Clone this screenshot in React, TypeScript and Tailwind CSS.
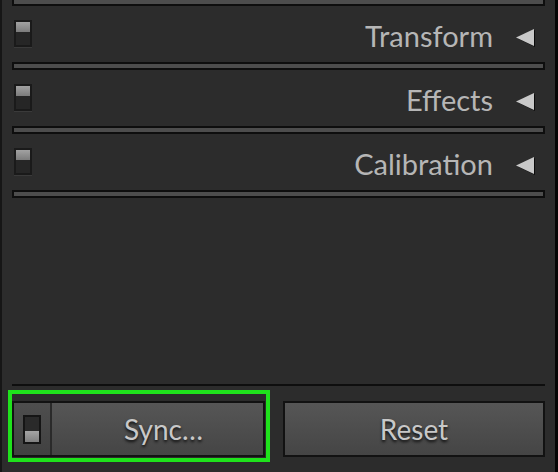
const sections = ["Transform", "Effects", "Calibration"];

const Separator = ({ className = "" }: { className?: string }) => (
  <div className={`h-[8px] border-2 border-[#0e0e0e] bg-[#4d4d4d] ${className}`} />
);

const PanelToggle = ({ on = true }: { on?: boolean }) => (
  <div className="flex h-[27px] w-[18px] flex-col border-2 border-[#1a1a1a] bg-[#262626] shadow-[0_1px_0_#3a3a3a]">
    {on && <div className="h-[10px] w-full bg-gradient-to-b from-[#a2a2a2] to-[#7c7c7c]" />}
  </div>
);

const CollapseArrow = () => (
  <svg width="21" height="20" viewBox="0 0 21 20" className="shrink-0">
    <polygon points="2.5,10.5 20,2 20,19" fill="#0c0c0c" />
    <polygon points="1,9.5 19,1 19,18" fill="#c9c9c9" />
  </svg>
);

const SectionRow = ({ title }: { title: string }) => (
  <>
    <div className="flex h-[56px] items-start">
      <div className="ml-[2px] mt-[14px]">
        <PanelToggle />
      </div>
      <div className="mt-[12px] h-[35px] flex-1 text-right text-[29px] leading-[35px] text-[#b6b6b6]">
        {title}
      </div>
      <div className="ml-[22px] mr-[9px] mt-[22px]">
        <CollapseArrow />
      </div>
    </div>
    <Separator />
  </>
);

export default function App() {
  return (
    <div
      className="flex h-[472px] w-[558px] bg-[#2c2c2c]"
      style={{ fontFamily: "Lato, 'Open Sans', sans-serif" }}
    >
      <div className="w-[2px] bg-[#161616]" />
      <div className="flex flex-1 flex-col overflow-hidden px-[10px]">
        <Separator className="-mt-[2px]" />
        {sections.map((s) => (
          <SectionRow key={s} title={s} />
        ))}

        <div className="flex-1" />

        {/* bottom bar */}
        <div className="h-[2px] bg-[#0e0e0e]" />
        <div className="mb-[10px] mt-[4px] flex h-[72px] items-start">
          <div className="mt-[4px] h-[64px] w-[254px] pr-[1px] pt-[7px] outline-4 outline-[#1fe21c]">
            <div className="flex h-[56px] border-2 border-[#121212] bg-gradient-to-b from-[#565656] to-[#454545]">
              <div className="flex w-[38px] items-center justify-center border-r-2 border-[#2a2a2a] bg-gradient-to-b from-[#4e4e4e] to-[#414141]">
                <div className="flex h-[29px] w-[18px] flex-col justify-end border-2 border-[#151515] bg-[#2a2a2a]">
                  <div className="h-[11px] w-full bg-gradient-to-b from-[#a4a4a4] to-[#808080]" />
                </div>
              </div>
              <div className="flex flex-1 items-center justify-center pl-[12px] text-[28px] text-[#c8c8c8] [text-shadow:0_2px_3px_rgba(0,0,0,0.85)]">
                Sync…
              </div>
            </div>
          </div>
          <div className="ml-[17px] mt-[11px] flex h-[56px] flex-1 items-center justify-center border-2 border-[#121212] bg-gradient-to-b from-[#565656] to-[#454545] text-[28px] text-[#c8c8c8] [text-shadow:0_2px_3px_rgba(0,0,0,0.85)]">
            Reset
          </div>
        </div>
      </div>
      <div className="w-[3px] bg-[#050505]" />
    </div>
  );
}
